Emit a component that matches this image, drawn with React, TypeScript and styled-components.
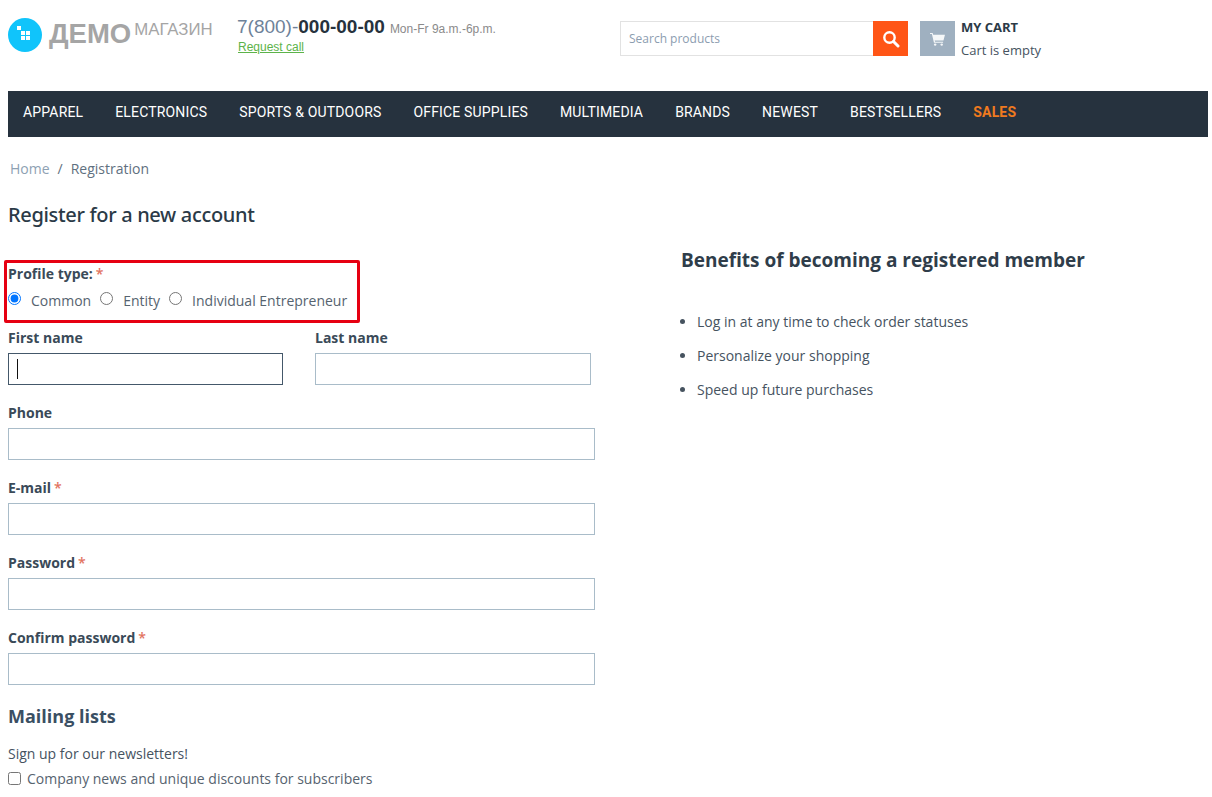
import styled, { createGlobalStyle } from 'styled-components';

const GlobalStyle = createGlobalStyle`
  html, body {
    margin: 0;
    background: #fff;
    overflow: hidden;
  }
  body {
    font-family: 'Open Sans', 'Noto Sans', sans-serif;
    font-size: 14px;
    color: #3a4a58;
  }
`;

const Page = styled.div`
  position: relative;
  width: 1212px;
  height: 797px;
  padding: 0 4px 0 8px;
  box-sizing: border-box;
  overflow: hidden;
`;

const Header = styled.header`
  display: flex;
  height: 91px;
`;

const Logo = styled.div`
  display: flex;
  width: 229px;
  padding-top: 18px;
  box-sizing: border-box;
`;

const LogoBig = styled.span`
  margin-left: 7px;
  font: bold 27.5px/32px 'Liberation Sans', sans-serif;
  color: #a5a5a5;
`;

const LogoSmall = styled.span`
  margin-left: 3px;
  font: 16.8px/24px 'Liberation Sans', sans-serif;
  color: #a5a5a5;
`;

const Contacts = styled.div`
  width: 383px;
  padding-top: 15px;
  font-family: 'Liberation Sans', sans-serif;
`;

const PhoneRow = styled.div`
  font-size: 19px;
  line-height: 24px;
  color: #6e8299;
  white-space: nowrap;
`;

const PhoneBold = styled.b`
  color: #26323d;
`;

const Hours = styled.span`
  margin-left: 5px;
  font-size: 12px;
  color: #8a8a8a;
`;

const CallLink = styled.a`
  display: block;
  margin-top: -1px;
  padding-left: 1px;
  font-size: 12px;
  line-height: 14px;
  color: #5cb34a;
  text-decoration: underline;
`;

const Search = styled.div`
  display: flex;
  width: 288px;
  height: 35px;
  margin-top: 21px;
`;

const SearchInput = styled.div`
  flex: 1;
  border: 1px solid #e2e2e2;
  border-right: 0;
  padding-left: 8px;
  font-size: 12px;
  line-height: 33px;
  color: #8c9db0;
`;

const SearchButton = styled.div`
  display: flex;
  align-items: center;
  justify-content: center;
  width: 35px;
  background: #ff5516;
`;

const CartIcon = styled.div`
  display: flex;
  align-items: center;
  justify-content: center;
  width: 35px;
  height: 35px;
  margin: 21px 0 0 12px;
  background: #9fb0c0;
`;

const CartText = styled.div`
  margin: 18px 0 0 6px;
`;

const CartTitle = styled.div`
  font-size: 13px;
  font-weight: 700;
  line-height: 18px;
  color: #2b3a47;
`;

const CartEmpty = styled.div`
  margin-top: 5px;
  font-size: 13px;
  line-height: 18px;
  color: #46535f;
`;

const Nav = styled.nav`
  display: flex;
  gap: 32px;
  height: 46px;
  padding-left: 15px;
  background: #26323e;
  font-family: Roboto, 'Liberation Sans', sans-serif;
  font-size: 14px;
  font-weight: 400;
  letter-spacing: 0.16px;
  line-height: 42px;
`;

const NavItem = styled.a<{ $accent?: boolean }>`
  color: ${({ $accent }) => ($accent ? '#ef7a1f' : '#fff')};
  font-weight: ${({ $accent }) => ($accent ? 700 : 400)};
  white-space: nowrap;
`;

const Breadcrumb = styled.div`
  display: flex;
  gap: 8px;
  padding: 22px 0 0 2px;
  font-size: 14px;
  line-height: 19px;
  color: #5f7080;
`;

const CrumbLink = styled.a`
  color: #8ea1b3;
`;

const Title = styled.h1`
  margin: 23px 0 0;
  font: 500 20px/28px 'Noto Sans', sans-serif;
  letter-spacing: -0.33px;
  color: #2b3a47;
`;

const Columns = styled.div`
  display: flex;
  gap: 86px;
  margin-top: 16px;
`;

const FormCol = styled.form`
  width: 587px;
  flex: none;
`;

const ProfileType = styled.div`
  padding-top: 19px;
  height: 83px;
  box-sizing: border-box;
`;

const Radios = styled.div`
  display: flex;
  height: 24px;
  margin-top: 5px;
`;

const RadioLabel = styled.label`
  display: flex;
  align-items: center;
  margin-right: 9px;
  color: #56636f;
`;

const Radio = styled.input`
  width: 13px;
  height: 13px;
  margin: 0 10px 3px 0;
  accent-color: #0075ff;
`;

const FieldLabel = styled.label`
  display: block;
  font-size: 14px;
  font-weight: 700;
  line-height: 19px;
  color: #3a4a58;
`;

const Star = styled.span`
  margin-left: 3px;
  font-weight: 600;
  color: #e2735f;
`;

const NameRow = styled.div`
  display: grid;
  grid-template-columns: 275px 276px;
  gap: 32px;
`;

const FieldGroup = styled.div`
  margin-bottom: 18px;
`;

const TextInput = styled.div<{ $focused?: boolean }>`
  position: relative;
  height: 32px;
  margin-top: 6px;
  box-sizing: border-box;
  border: 1px solid ${({ $focused }) => ($focused ? '#44586a' : '#a9bcc9')};
`;

const Caret = styled.span`
  position: absolute;
  left: 8px;
  top: 5px;
  width: 1px;
  height: 20px;
  background: #111;
`;

const SectionTitle = styled.h3`
  margin: 0;
  padding-top: 1px;
  font-size: 18px;
  font-weight: 700;
  line-height: 24px;
  color: #3a4f63;
`;

const Note = styled.p`
  margin: 16px 0 0;
  line-height: 19px;
  color: #46535f;
`;

const CheckRow = styled.label`
  display: flex;
  align-items: center;
  margin-top: 6px;
  line-height: 19px;
  color: #56636f;
`;

const Check = styled.input`
  width: 13px;
  height: 13px;
  margin: 0 6px 0 0;
`;

const BenefitsCol = styled.aside`
  padding-top: 2px;
`;

const BenefitsTitle = styled.h2`
  margin: 0;
  font-size: 19px;
  font-weight: 700;
  line-height: 27px;
  color: #2f3d4a;
`;

const BenefitList = styled.ul`
  margin: 38px 0 0;
  padding: 0 0 0 16px;
`;

const BenefitItem = styled.li`
  line-height: 19px;
  margin-bottom: 15px;
  color: #46535f;
`;

const RedBox = styled.div`
  position: absolute;
  left: 4px;
  top: 260px;
  width: 356px;
  height: 63px;
  box-sizing: border-box;
  border: 3px solid #e60012;
  border-radius: 2px;
`;

const navItems = [
  'APPAREL',
  'ELECTRONICS',
  'SPORTS & OUTDOORS',
  'OFFICE SUPPLIES',
  'MULTIMEDIA',
  'BRANDS',
  'NEWEST',
  'BESTSELLERS',
];

export default function App() {
  return (
    <Page>
      <GlobalStyle />
      <Header>
        <Logo>
          <svg width="34" height="34" viewBox="0 0 34 34">
            <circle cx="17" cy="17" r="17" fill="#10c4fb" />
            <rect x="9" y="8" width="4" height="4" fill="#fff" />
            <rect x="13" y="13" width="4" height="4" fill="#fff" />
            <rect x="18" y="13" width="4" height="4" fill="#fff" />
            <rect x="13" y="18" width="4" height="4" fill="#fff" />
            <rect x="18" y="18" width="4" height="4" fill="#fff" />
          </svg>
          <LogoBig>ДЕМО</LogoBig>
          <LogoSmall>МАГАЗИН</LogoSmall>
        </Logo>
        <Contacts>
          <PhoneRow>
            7(800)-<PhoneBold>000-00-00</PhoneBold>
            <Hours>Mon-Fr 9a.m.-6p.m.</Hours>
          </PhoneRow>
          <CallLink>Request call</CallLink>
        </Contacts>
        <Search>
          <SearchInput>Search products</SearchInput>
          <SearchButton>
            <svg width="18" height="18" viewBox="0 0 18 18" fill="none" stroke="#fff">
              <circle cx="7.5" cy="7.5" r="5.2" strokeWidth="2.4" />
              <path d="M11.5 11.5 16 16" strokeWidth="3" strokeLinecap="round" />
            </svg>
          </SearchButton>
        </Search>
        <CartIcon>
          <svg width="15" height="14" viewBox="0 0 16 15" fill="#fff" opacity="0.9">
            <path d="M0 1h2.8l.6 2H16l-1.6 6H5l.4 1.4H14v1.2H4.2L2 2.2H0z" />
            <circle cx="5.5" cy="13.5" r="1.3" />
            <circle cx="12.5" cy="13.5" r="1.3" />
          </svg>
        </CartIcon>
        <CartText>
          <CartTitle>MY CART</CartTitle>
          <CartEmpty>Cart is empty</CartEmpty>
        </CartText>
      </Header>

      <Nav>
        {navItems.map((item) => (
          <NavItem key={item}>{item}</NavItem>
        ))}
        <NavItem $accent>SALES</NavItem>
      </Nav>

      <Breadcrumb>
        <CrumbLink>Home</CrumbLink>
        <span>/</span>
        <span>Registration</span>
      </Breadcrumb>

      <Title>Register for a new account</Title>

      <Columns>
        <FormCol>
          <ProfileType>
            <FieldLabel>
              Profile type:<Star>*</Star>
            </FieldLabel>
            <Radios>
              <RadioLabel>
                <Radio type="radio" name="profile" defaultChecked />
                Common
              </RadioLabel>
              <RadioLabel>
                <Radio type="radio" name="profile" />
                Entity
              </RadioLabel>
              <RadioLabel>
                <Radio type="radio" name="profile" />
                Individual Entrepreneur
              </RadioLabel>
            </Radios>
          </ProfileType>

          <NameRow>
            <FieldGroup>
              <FieldLabel>First name</FieldLabel>
              <TextInput $focused>
                <Caret />
              </TextInput>
            </FieldGroup>
            <FieldGroup>
              <FieldLabel>Last name</FieldLabel>
              <TextInput />
            </FieldGroup>
          </NameRow>

          <FieldGroup>
            <FieldLabel>Phone</FieldLabel>
            <TextInput />
          </FieldGroup>
          <FieldGroup>
            <FieldLabel>
              E-mail<Star>*</Star>
            </FieldLabel>
            <TextInput />
          </FieldGroup>
          <FieldGroup>
            <FieldLabel>
              Password<Star>*</Star>
            </FieldLabel>
            <TextInput />
          </FieldGroup>
          <FieldGroup>
            <FieldLabel>
              Confirm password<Star>*</Star>
            </FieldLabel>
            <TextInput />
          </FieldGroup>

          <SectionTitle>Mailing lists</SectionTitle>
          <Note>Sign up for our newsletters!</Note>
          <CheckRow>
            <Check type="checkbox" />
            Company news and unique discounts for subscribers
          </CheckRow>
        </FormCol>

        <BenefitsCol>
          <BenefitsTitle>Benefits of becoming a registered member</BenefitsTitle>
          <BenefitList>
            <BenefitItem>Log in at any time to check order statuses</BenefitItem>
            <BenefitItem>Personalize your shopping</BenefitItem>
            <BenefitItem>Speed up future purchases</BenefitItem>
          </BenefitList>
        </BenefitsCol>
      </Columns>

      <RedBox />
    </Page>
  );
}
